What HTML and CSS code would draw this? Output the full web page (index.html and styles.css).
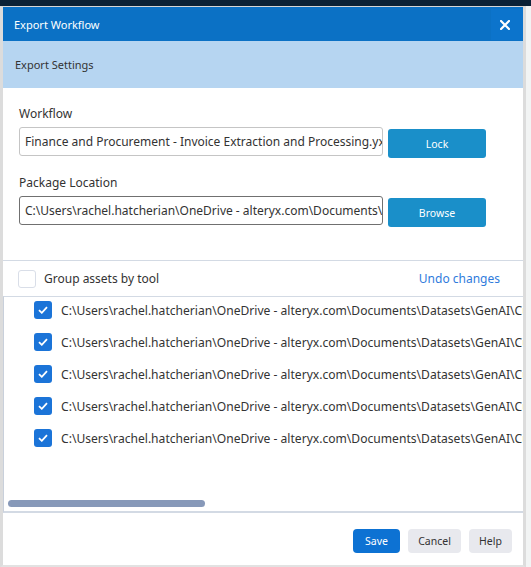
FILE: index.html
```html
<!DOCTYPE html>
<html>
<head>
<meta charset="utf-8">
<link rel="stylesheet" href="styles.css">
</head>
<body>
<div class="topstrip"></div>
<div class="dialog">
  <div class="titlebar">
    <span class="title">Export Workflow</span>
    <button class="close" aria-label="Close">
      <svg width="10" height="10" viewBox="0 0 10 10"><path d="M1 1L9 9M9 1L1 9" stroke="#fff" stroke-width="2.2" stroke-linecap="square"/></svg>
    </button>
  </div>
  <div class="band">Export Settings</div>
  <div class="form">
    <label class="label">Workflow</label>
    <div class="field-row">
      <div class="input">Finance and Procurement - Invoice Extraction and Processing.yxmd</div>
      <button class="btn-side">Lock</button>
    </div>
    <label class="label second">Package Location</label>
    <div class="field-row">
      <div class="input dark">C:\Users\rachel.hatcherian\OneDrive - alteryx.com\Documents\Datasets</div>
      <button class="btn-side">Browse</button>
    </div>
  </div>
  <div class="group-row">
    <span class="checkbox empty"></span>
    <span class="group-text">Group assets by tool</span>
    <a class="undo">Undo changes</a>
  </div>
  <div class="list">
    <div class="rows">
      <div class="row"><span class="checkbox checked"><svg width="10" height="8" viewBox="0 0 10 8"><path d="M1 4.2L3.8 6.8L9 1.2" fill="none" stroke="#fff" stroke-width="1.8"/></svg></span><span class="path">C:\Users\rachel.hatcherian\OneDrive - alteryx.com\Documents\Datasets\GenAI\Customer Invoices\invoice_01.pdf</span></div>
      <div class="row"><span class="checkbox checked"><svg width="10" height="8" viewBox="0 0 10 8"><path d="M1 4.2L3.8 6.8L9 1.2" fill="none" stroke="#fff" stroke-width="1.8"/></svg></span><span class="path">C:\Users\rachel.hatcherian\OneDrive - alteryx.com\Documents\Datasets\GenAI\Customer Invoices\invoice_02.pdf</span></div>
      <div class="row"><span class="checkbox checked"><svg width="10" height="8" viewBox="0 0 10 8"><path d="M1 4.2L3.8 6.8L9 1.2" fill="none" stroke="#fff" stroke-width="1.8"/></svg></span><span class="path">C:\Users\rachel.hatcherian\OneDrive - alteryx.com\Documents\Datasets\GenAI\Customer Invoices\invoice_03.pdf</span></div>
      <div class="row"><span class="checkbox checked"><svg width="10" height="8" viewBox="0 0 10 8"><path d="M1 4.2L3.8 6.8L9 1.2" fill="none" stroke="#fff" stroke-width="1.8"/></svg></span><span class="path">C:\Users\rachel.hatcherian\OneDrive - alteryx.com\Documents\Datasets\GenAI\Customer Invoices\invoice_04.pdf</span></div>
      <div class="row"><span class="checkbox checked"><svg width="10" height="8" viewBox="0 0 10 8"><path d="M1 4.2L3.8 6.8L9 1.2" fill="none" stroke="#fff" stroke-width="1.8"/></svg></span><span class="path">C:\Users\rachel.hatcherian\OneDrive - alteryx.com\Documents\Datasets\GenAI\Customer Invoices\invoice_05.pdf</span></div>
    </div>
    <div class="hscroll"><div class="thumb"></div></div>
  </div>
  <div class="footer">
    <button class="btn primary">Save</button>
    <button class="btn secondary">Cancel</button>
    <button class="btn secondary">Help</button>
  </div>
</div>
</body>
</html>
```
FILE: styles.css
```css
* { box-sizing: border-box; }
html, body { margin: 0; padding: 0; }
body {
  background: #f2f4f4;
  font-family: "Noto Sans", "Open Sans", sans-serif;
  color: #333;
  width: 531px;
  height: 567px;
  overflow: hidden;
}
.topstrip {
  height: 6px;
  background: #0b2136;
}
.dialog {
  width: 526px;
  height: 561px;
  background: #fff;
  border: 3px solid #dcdcdc;
  border-top: 1px solid #d6d6d6;
  border-bottom: 2px solid #e2e2e2;
  display: flex;
  flex-direction: column;
}
.titlebar {
  height: 34px;
  background: #0b71c5;
  display: flex;
  align-items: center;
  justify-content: space-between;
  padding-left: 11px;
}
.title {
  color: #fff;
  font-size: 11px;
}
.close {
  width: 32px;
  height: 31px;
  margin-top: 1px;
  border: 0;
  background: #0c74cc;
  display: flex;
  align-items: center;
  justify-content: center;
  padding: 0 4px 0 0;
}
.band {
  height: 47px;
  background: #b6d5f1;
  font-size: 11px;
  padding-left: 12px;
  display: flex;
  align-items: center;
  color: #333;
}
.form {
  padding: 17px 0 0 16px;
  height: 173px;
  border-bottom: 1px solid #d3dae4;
}
.label {
  display: block;
  font-size: 12px;
  line-height: 18px;
  margin-bottom: 4px;
}
.label.second { margin-top: 16px; }
.field-row {
  display: flex;
  align-items: flex-start;
  gap: 5px;
}
.input {
  width: 364px;
  height: 29px;
  border: 1px solid #c5c5c5;
  border-radius: 3px;
  font-size: 12px;
  line-height: 27px;
  padding-left: 5px;
  white-space: nowrap;
  overflow: hidden;
  color: #333;
}
.input.dark { border-color: #707070; }
.btn-side {
  margin-top: 2px;
  width: 98px;
  height: 29px;
  background: #1a8fc9;
  border: 0;
  border-radius: 3px;
  color: #fff;
  font-family: inherit;
  font-size: 10.5px;
}
.group-row {
  height: 35px;
  display: flex;
  align-items: center;
  padding-left: 15px;
  padding-right: 23px;
}
.checkbox {
  width: 18px;
  height: 18px;
  border-radius: 3px;
  display: inline-flex;
  align-items: center;
  justify-content: center;
  flex: none;
}
.checkbox.empty {
  border: 1px solid #d9dee8;
  background: #fff;
}
.checkbox.checked {
  background: #1b74d8;
}
.group-text {
  margin-left: 8px;
  font-size: 12px;
  flex: 1;
}
.undo {
  color: #2f7bdc;
  font-size: 12px;
}
.list {
  height: 217px;
  width: 520px;
  border-top: 1px solid #d3dae4;
  border-left: 1px solid #c9d0db;
  border-bottom: 2px solid #d3dae4;
  overflow: hidden;
  display: flex;
  flex-direction: column;
}
.rows {
  padding: 4px 0 0 30px;
  display: flex;
  flex-direction: column;
  gap: 14px;
}
.row {
  display: flex;
  align-items: center;
  height: 18px;
  white-space: nowrap;
}
.path {
  margin-left: 9px;
  font-size: 12.1px;
  color: #333;
}
.hscroll {
  margin-top: auto;
  padding: 0 0 4px 4px;
}
.thumb {
  width: 197px;
  height: 7px;
  border-radius: 4px;
  background: #8799b9;
}
.footer {
  flex: 1;
  display: flex;
  justify-content: flex-end;
  align-items: flex-start;
  gap: 8px;
  padding: 16px 11px 0 0;
}
.btn {
  height: 24px;
  border: 0;
  border-radius: 4px;
  font-family: inherit;
  font-size: 10.5px;
  padding: 0;
}
.btn.primary { background: #0d72d3; color: #fff; width: 47px; }
.btn.secondary { background: #e8e9ee; color: #333; }
.btn.secondary:nth-child(2) { width: 53px; }
.btn.secondary:nth-child(3) { width: 43px; }
```
